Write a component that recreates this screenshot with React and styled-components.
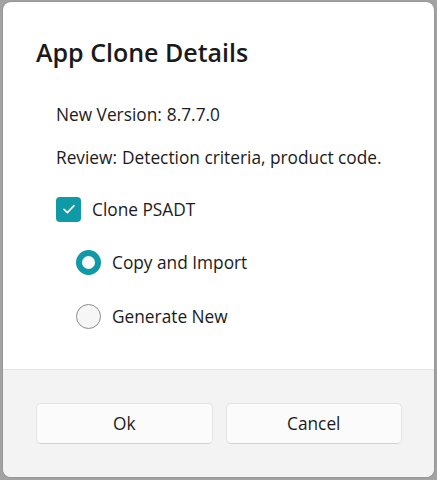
import React from "react";
import styled, { createGlobalStyle } from "styled-components";

const GlobalStyle = createGlobalStyle`
	html, body {
		margin: 0;
		padding: 0;
		background: #a3a3a3;
	}
	body {
		font-family: "Open Sans", "Noto Sans", sans-serif;
		color: #1b1b1b;
	}
`;

function App() {
	return (
		<>
			<GlobalStyle />
			<Backdrop>
				<Dialog>
					<Content>
						<Title>App Clone Details</Title>
						<Details>
							<InfoRow>
								<span>New Version:</span>
								<span>8.7.7.0</span>
							</InfoRow>
							<InfoRow>
								<span>Review:</span>
								<span>Detection criteria, product code.</span>
							</InfoRow>
							<Options>
								<Option>
									<CheckBox>
										<svg width="16" height="16" viewBox="0 0 16 16">
											<path d="M3 8.4 L6.4 11.6 L13 4.6" fill="none" stroke="#fff" strokeWidth="1.6" strokeLinecap="round" strokeLinejoin="round" />
										</svg>
									</CheckBox>
									Clone PSADT
								</Option>
								<Option $indent>
									<Radio $checked />
									Copy and Import
								</Option>
								<Option $indent>
									<Radio />
									Generate New
								</Option>
							</Options>
						</Details>
					</Content>
					<Footer>
						<Button>Ok</Button>
						<Button>Cancel</Button>
					</Footer>
				</Dialog>
			</Backdrop>
		</>
	);
}

export default App;

const Backdrop = styled.div`
	padding: 2px 3px 3px 3px;
`;

const Dialog = styled.div`
	height: 475px;
	background: #ffffff;
	border-radius: 8px;
	overflow: hidden;
	display: flex;
	flex-direction: column;
	box-shadow: 0 0 2px rgba(0, 0, 0, 0.25);
`;

const Content = styled.div`
	flex: 1;
	padding: 34px 33px 0 33px;
`;

const Title = styled.h1`
	margin: 0;
	font-size: 25px;
	font-weight: 600;
	line-height: 32px;
	color: #1a1a1a;
`;

const Details = styled.div`
	margin-top: 35px;
	padding-left: 20px;
	display: flex;
	flex-direction: column;
	font-size: 17.3px;
`;

const InfoRow = styled.div`
	display: flex;
	gap: 5px;
	height: 43px;
	line-height: 24px;
`;

const Options = styled.div`
	display: flex;
	flex-direction: column;
	gap: 13.5px;
`;

const Option = styled.label`
	display: flex;
	align-items: center;
	gap: 11px;
	height: 40px;
	padding-left: ${(p) => (p.$indent ? "20px" : "0")};
`;

const CheckBox = styled.span`
	width: 25px;
	height: 25px;
	border-radius: 4px;
	background: #0e9aa6;
	display: flex;
	align-items: center;
	justify-content: center;
`;

const Radio = styled.span`
	width: 25px;
	height: 25px;
	box-sizing: border-box;
	border-radius: 50%;
	background: ${(p) => (p.$checked ? "#ffffff" : "#f6f6f6")};
	border: ${(p) => (p.$checked ? "6px solid #0e9aa6" : "1px solid #8b8b8b")};
`;

const Footer = styled.div`
	height: 108px;
	box-sizing: border-box;
	background: #f3f3f3;
	border-top: 1px solid #e5e5e5;
	padding: 33px 32px 0 33px;
	display: grid;
	grid-template-columns: 1fr 1fr;
	column-gap: 13px;
	align-items: start;
`;

const Button = styled.button`
	height: 41px;
	border-radius: 5px;
	border: 1px solid #e3e3e3;
	border-bottom-color: #d2d2d2;
	background: #fbfbfb;
	font-family: inherit;
	font-size: 17.3px;
	color: #1b1b1b;
`;
